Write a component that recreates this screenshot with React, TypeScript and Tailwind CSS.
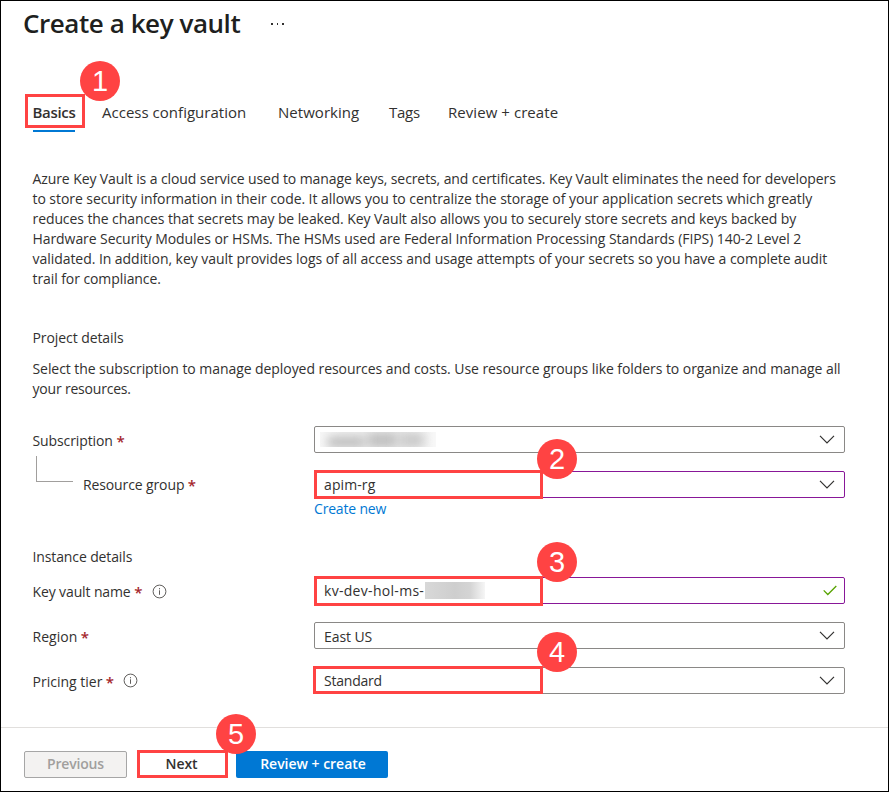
import type { ReactNode } from "react";

const intro: [string, string][] = [
  ["Azure Key Vault is a cloud service used to manage keys, secrets, and certificates. Key Vault eliminates the need for developers", "tracking-[-0.095px]"],
  ["to store security information in their code. It allows you to centralize the storage of your application secrets which greatly", "tracking-[-0.062px]"],
  ["reduces the chances that secrets may be leaked. Key Vault also allows you to securely store secrets and keys backed by", "tracking-[-0.09px]"],
  ["Hardware Security Modules or HSMs. The HSMs used are Federal Information Processing Standards (FIPS) 140-2 Level 2", "tracking-[-0.072px]"],
  ["validated. In addition, key vault provides logs of all access and usage attempts of your secrets so you have a complete audit", "tracking-[-0.049px]"],
  ["trail for compliance.", "tracking-[-0.08px]"],
];

function Badge({ n, className }: { n: number; className: string }) {
  return (
    <span
      className={`absolute z-20 flex size-10 items-center justify-center rounded-full bg-[#ff4343] font-['Liberation_Sans',Arial,sans-serif] text-[29px] leading-none font-normal text-white ${className}`}
    >
      {n}
    </span>
  );
}

function Highlight({ className }: { className: string }) {
  return <span className={`pointer-events-none absolute z-10 border-3 border-[#ff4343] ${className}`} />;
}

function Chevron() {
  return (
    <svg className="ml-auto mr-[9px] h-[9px] w-4 shrink-0" viewBox="0 0 16 9" fill="none" stroke="#323130" strokeWidth="1.2">
      <path d="M1 .9 8 7.9 15 .9" />
    </svg>
  );
}

function Info() {
  return (
    <svg className="size-[15px] shrink-0" viewBox="0 0 15 15" fill="none" stroke="#605e5c">
      <circle cx="7.5" cy="7.5" r="6.4" strokeWidth="1" />
      <path d="M7.5 6.3v4.5M7.5 4.1v1.2" strokeWidth="1" />
    </svg>
  );
}

function Label({ text, className = "", tracking, info }: { text: string; className?: string; tracking: string; info?: string }) {
  return (
    <div className={`flex w-[281px] shrink-0 items-center ${className}`}>
      <span className={tracking}>{text}</span>
      <span className="ml-[3.5px] w-[7px] text-[15px] leading-[18px] font-semibold text-[#a4262c]">*</span>
      {info && (
        <span className={info}>
          <Info />
        </span>
      )}
    </div>
  );
}

function Field({ purple, children }: { purple?: boolean; children: ReactNode }) {
  return (
    <div
      className={`relative flex h-[27px] w-[531px] items-center rounded-[2px] border pl-[9px] ${purple ? "border-[#881798]" : "border-[#8a8886]"}`}
    >
      {children}
    </div>
  );
}

export default function App() {
  return (
    <div className="flex h-[792px] w-[889px] flex-col overflow-hidden whitespace-nowrap border border-black bg-white font-['Open_Sans','Noto_Sans',sans-serif] text-[14px] leading-5 text-[#323130]">
      <header className="flex h-11 items-center pl-[22px]">
        <h1 className="w-[217px] text-[26px] font-semibold tracking-[-0.44px] text-[#201f1e]">Create a key vault</h1>
        <span className="mt-0.5 ml-[31px] flex gap-[4px]">
          <i className="size-[1.5px] bg-[#323130]" />
          <i className="size-[1.5px] bg-[#323130]" />
          <i className="size-[1.5px] bg-[#323130]" />
        </span>
      </header>

      <nav className="mt-[47px] flex h-[39px] pl-8 text-[15px] leading-[41px]">
        <div className="relative w-[69px]">
          <span className="-ml-[0.5px] font-semibold tracking-[-0.3px]">Basics</span>
          <span className="absolute top-[37.5px] left-0 h-0.5 w-[42px] bg-[#0078d4]" />
          <Highlight className="top-0.5 -left-2 h-[34px] w-[60px]" />
          <Badge n={1} className="-top-[31px] left-[47px]" />
        </div>
        <span className="w-44 tracking-[0.02px]">Access configuration</span>
        <span className="w-[111px] tracking-[0.04px]">Networking</span>
        <span className="w-[59px] tracking-[-0.25px]">Tags</span>
        <span className="tracking-[0.06px]">Review + create</span>
      </nav>

      <main className="flex flex-col pl-8">
        <p className="mt-[38px] -ml-[0.5px]">
          {intro.map(([line, tracking]) => (
            <span key={line} className={`block ${tracking}`}>{line}</span>
          ))}
        </p>

        <h2 className="mt-[39px] -ml-[0.5px] tracking-[-0.08px]">Project details</h2>
        <p className="mt-[11px] -ml-[0.5px]">
          <span className="block tracking-[-0.066px]">
            Select the subscription to manage deployed resources and costs. Use resource groups like folders to organize and manage all
          </span>
          <span className="block tracking-[-0.2px]">your resources.</span>
        </p>

        <div className="mt-[27px] flex h-[27px] items-center">
          <Label text="Subscription" tracking="-ml-[0.5px] tracking-[-0.1px]" className="pt-0.5" />
          <Field>
            <span className="-ml-1 h-[15px] w-[116px] overflow-hidden bg-[linear-gradient(90deg,#f7f7f7,#eee_20%,#e8e8e8_70%,#f8f8f8)]">
              <span className="flex h-full items-end gap-1 pl-2 blur-[5px]">
                <i className="h-2.5 w-9 bg-[#bdbdbd]" />
                <i className="h-3.5 w-7 bg-[#c0c0c0]" />
                <i className="h-3.5 w-6 bg-[#cbcbcb]" />
              </span>
            </span>
            <Chevron />
          </Field>
        </div>

        <div className="relative mt-[18px] flex h-[27px] items-center">
          <span className="absolute -top-[15px] left-[3px] h-[26px] w-[37px] border-b border-l border-[#a19f9d]" />
          <Label text="Resource group" tracking="tracking-[-0.12px]" className="pl-[50px]" />
          <Field purple>
            <span className="tracking-[0.1px]">apim-rg</span>
            <Chevron />
            <Highlight className="-top-0.5 -left-px h-[29px] w-[229px]" />
            <Badge n={2} className="-top-[33px] left-[222px]" />
          </Field>
        </div>
        <a className="ml-[281px] mt-px tracking-[-0.18px] text-[#0078d4]">Create new</a>

        <h2 className="mt-7 -ml-[0.5px] tracking-[-0.12px]">Instance details</h2>
        <div className="mt-[10px] flex h-[27px] items-center">
          <Label text="Key vault name" tracking="-ml-[0.5px] tracking-[-0.12px]" info="ml-[11px]" className="pt-0.5" />
          <Field purple>
            <span className="tracking-[0.3px]">kv-dev-hol-ms-</span>
            <span className="ml-px h-[17px] w-[60px] bg-[linear-gradient(90deg,#d8d8d8,#cecece_50%,#d4d4d4_75%,#f6f6f6)]" />
            <svg className="ml-auto mr-[7px] h-[11px] w-[14px]" viewBox="0 0 14 11" fill="none" stroke="#57a300" strokeWidth="1.3">
              <path d="M.7 5.4 4.8 9.5 13.3 1" />
            </svg>
            <Highlight className="-top-0.5 -left-px h-[30px] w-[229px]" />
            <Badge n={3} className="-top-9 left-[222px]" />
          </Field>
        </div>
        <div className="mt-[18px] flex h-[27px] items-center">
          <Label text="Region" tracking="-ml-[0.5px] tracking-[0.03px]" className="pt-0.5" />
          <Field>
            <span className="pt-0.5 tracking-[-0.08px]">East US</span>
            <Chevron />
          </Field>
        </div>
        <div className="mt-[18px] flex h-[27px] items-center">
          <Label text="Pricing tier" tracking="-ml-[0.5px] tracking-[0px]" info="ml-[10.5px] -mt-0.5" className="pt-0.5" />
          <Field>
            <span className="tracking-[-0.22px]">Standard</span>
            <Chevron />
            <Highlight className="-top-0.5 -left-0.5 h-7 w-[230px]" />
            <Badge n={4} className="-top-9 left-[222px]" />
          </Field>
        </div>
      </main>

      <footer className="relative mt-[33px] flex grow items-start border-t border-[#e1dfdd] pt-[23px] pl-[23px] font-semibold">
        <button className="h-[27px] w-[103px] rounded-[2px] border border-[#a6a6a6] bg-[#f3f2f1] pb-0.5 tracking-[-0.18px] text-[#a19f9d]">Previous</button>
        <button className="relative ml-[10px] h-[27px] w-[91px] pr-0.5 pb-0.5 tracking-[-0.1px]">
          Next
          <Highlight className="-top-px left-0 h-7 w-[91px]" />
        </button>
        <button className="ml-2 h-[27px] w-[152px] rounded-[2px] bg-[#0078d4] pb-0.5 pl-0.5 tracking-[-0.02px] text-white">Review + create</button>
        <Badge n={5} className="-top-3.5 left-[215px]" />
      </footer>
    </div>
  );
}
